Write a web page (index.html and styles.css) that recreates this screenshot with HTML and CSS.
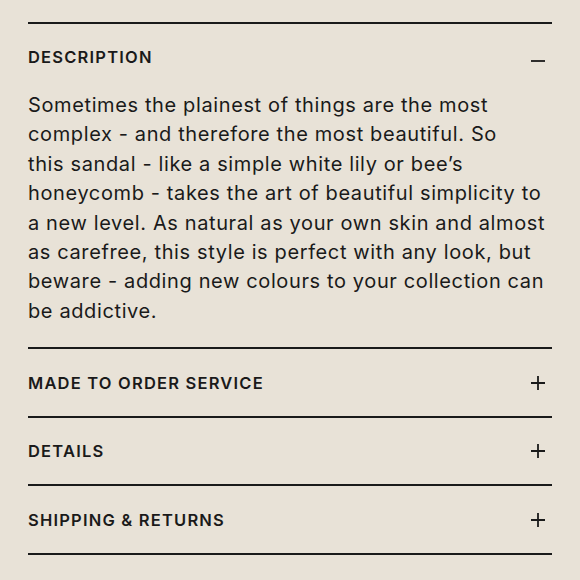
FILE: index.html
```html
<!DOCTYPE html>
<html lang="en">
<head>
<meta charset="utf-8">
<title>Product accordion</title>
<link rel="stylesheet" href="styles.css">
</head>
<body>
<div class="accordion">
  <section class="item open">
    <div class="item-head">
      <h3 class="item-title">DESCRIPTION</h3>
      <svg class="icon icon-minus" width="14" height="14" viewBox="0 0 14 14"><path d="M0 7h14" stroke="#1a1a1a" stroke-width="1.8"/></svg>
    </div>
    <p class="item-body">Sometimes the plainest of things are the most<br>
complex - and therefore the most beautiful. So<br>
this sandal - like a simple white lily or bee’s<br>
honeycomb - takes the art of beautiful simplicity to<br>
a new level. As natural as your own skin and almost<br>
as carefree, this style is perfect with any look, but<br>
beware - adding new colours to your collection can<br>
be addictive.</p>
  </section>
  <section class="item">
    <div class="item-head">
      <h3 class="item-title">MADE TO ORDER SERVICE</h3>
      <svg class="icon" width="14" height="14" viewBox="0 0 14 14"><path d="M0 7h14M7 0v14" stroke="#1a1a1a" stroke-width="1.8"/></svg>
    </div>
  </section>
  <section class="item">
    <div class="item-head">
      <h3 class="item-title">DETAILS</h3>
      <svg class="icon" width="14" height="14" viewBox="0 0 14 14"><path d="M0 7h14M7 0v14" stroke="#1a1a1a" stroke-width="1.8"/></svg>
    </div>
  </section>
  <section class="item last">
    <div class="item-head">
      <h3 class="item-title">SHIPPING &amp; RETURNS</h3>
      <svg class="icon" width="14" height="14" viewBox="0 0 14 14"><path d="M0 7h14M7 0v14" stroke="#1a1a1a" stroke-width="1.8"/></svg>
    </div>
  </section>
</div>
</body>
</html>
```
FILE: styles.css
```css
html, body {
  margin: 0;
  padding: 0;
  background: #e8e2d7;
}
body {
  padding: 22px 28px 0;
  font-family: Inter, "Noto Sans", sans-serif;
  color: #1a1a1a;
}
.accordion {
  display: flex;
  flex-direction: column;
}
.item {
  border-top: 2px solid #1a1a1a;
}
.item.last {
  border-bottom: 2px solid #1a1a1a;
}
.item-head {
  height: 66.5px;
  display: flex;
  align-items: center;
  justify-content: space-between;
}
.open .item-head {
  height: 66px;
}
.item-title {
  margin: 0;
  font-size: 16.5px;
  font-weight: 600;
  letter-spacing: 1.2px;
}
.icon {
  display: block;
  margin-right: 7px;
}
.icon-minus {
  margin-top: 8px;
}
.item-body {
  margin: 0;
  padding: 1px 0 21px;
  font-size: 20px;
  line-height: 29.4px;
  letter-spacing: 0.62px;
  white-space: nowrap;
}
```
